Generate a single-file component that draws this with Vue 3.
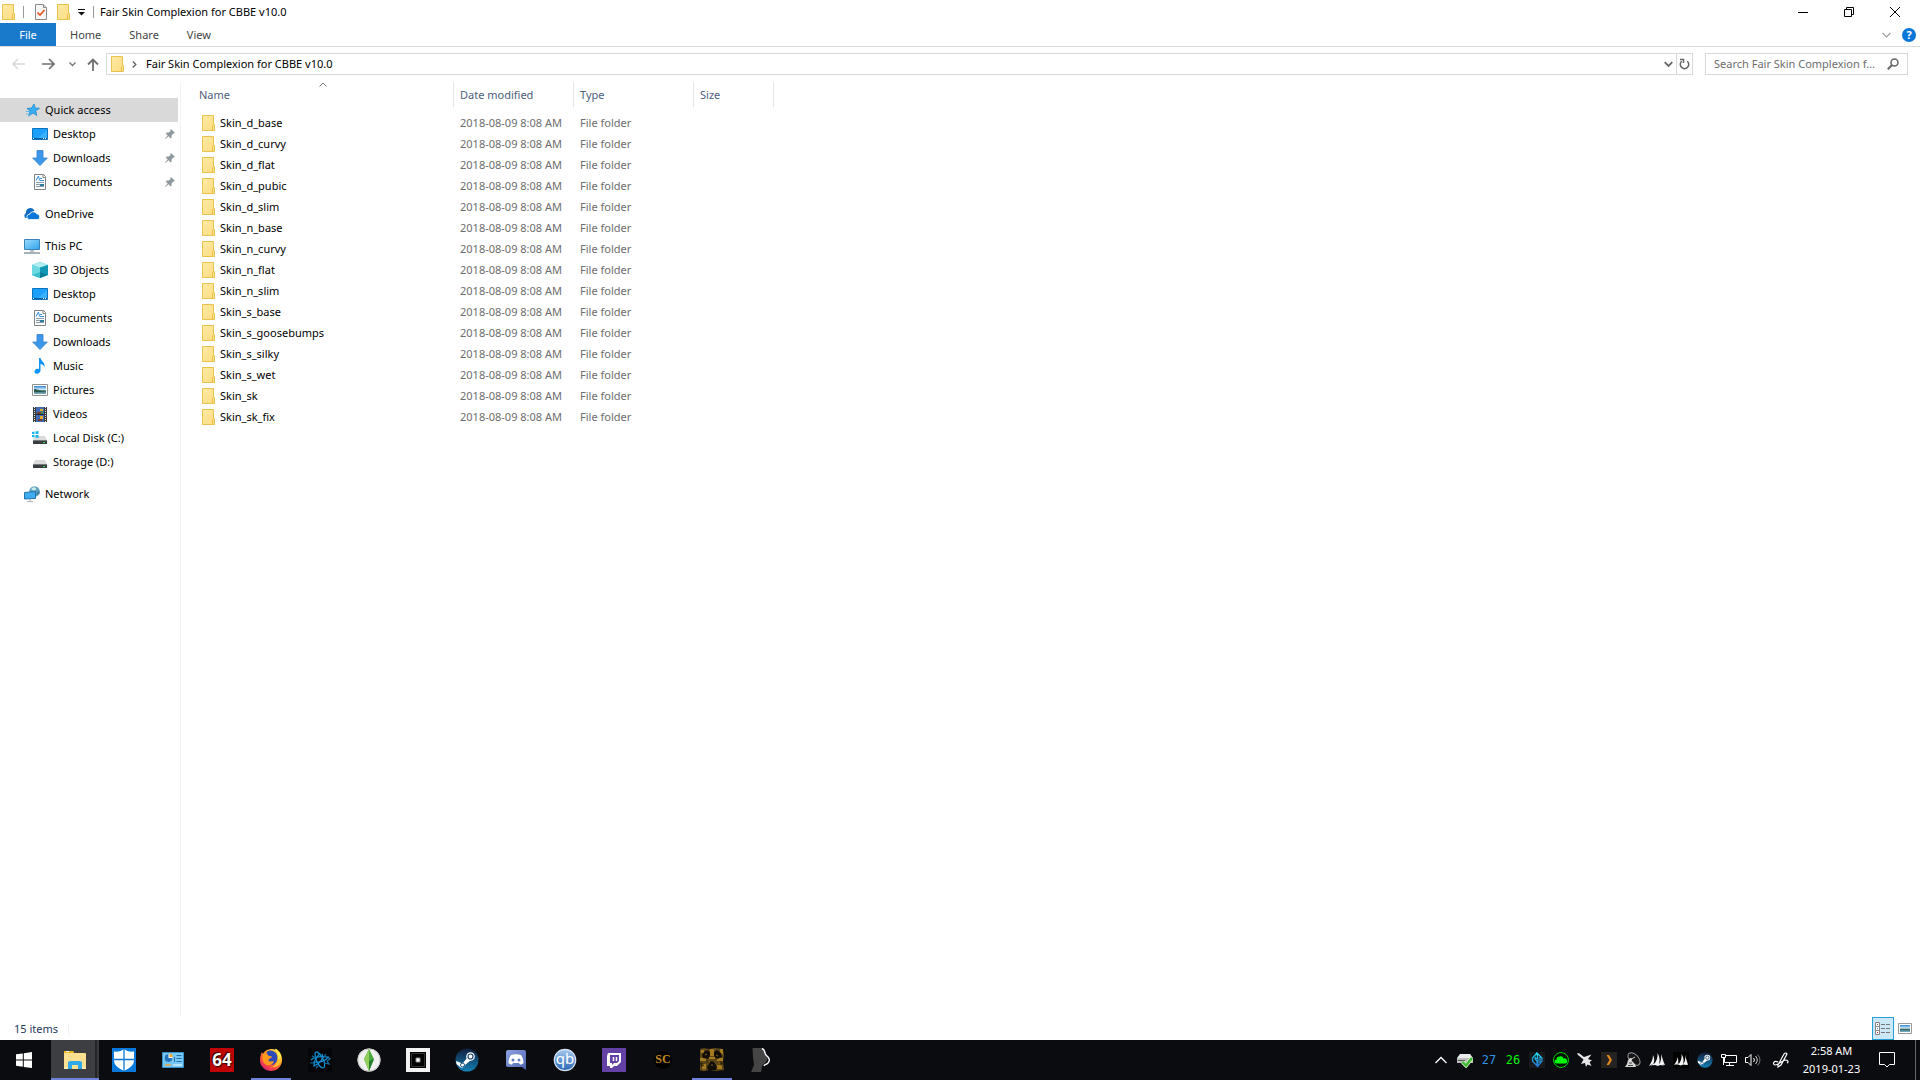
<script setup>
const quickAccess = [
  { label: 'Desktop', icon: 'desktop' },
  { label: 'Downloads', icon: 'downloads' },
  { label: 'Documents', icon: 'documents' },
]

const thisPc = [
  { label: '3D Objects', icon: 'objects' },
  { label: 'Desktop', icon: 'desktop' },
  { label: 'Documents', icon: 'documents' },
  { label: 'Downloads', icon: 'downloads' },
  { label: 'Music', icon: 'music' },
  { label: 'Pictures', icon: 'pictures' },
  { label: 'Videos', icon: 'videos' },
  { label: 'Local Disk (C:)', icon: 'disk-c' },
  { label: 'Storage (D:)', icon: 'disk-d' },
]

const folders = [
  'Skin_d_base', 'Skin_d_curvy', 'Skin_d_flat', 'Skin_d_pubic', 'Skin_d_slim',
  'Skin_n_base', 'Skin_n_curvy', 'Skin_n_flat', 'Skin_n_slim',
  'Skin_s_base', 'Skin_s_goosebumps', 'Skin_s_silky', 'Skin_s_wet',
  'Skin_sk', 'Skin_sk_fix',
]

const apps = [
  { name: 'File Explorer', icon: 'explorer', active: true },
  { name: 'Windows Defender', icon: 'defender' },
  { name: 'Control Panel', icon: 'control' },
  { name: 'AIDA64', icon: 'aida', mark: '64' },
  { name: 'Firefox', icon: 'firefox', running: true },
  { name: 'Battle.net', icon: 'battlenet' },
  { name: 'The Sims', icon: 'sims' },
  { name: 'Square', icon: 'square' },
  { name: 'Steam', icon: 'steam' },
  { name: 'Discord', icon: 'discord' },
  { name: 'qBittorrent', icon: 'qb', mark: 'qb' },
  { name: 'Twitch', icon: 'twitch' },
  { name: 'SC', icon: 'sc', mark: 'SC' },
  { name: 'Stalker', icon: 'stalker', running: true },
  { name: 'Body editor', icon: 'body' },
]

const tray = [
  { name: 'Show hidden icons', icon: 't-caret' },
  { name: 'Safely remove hardware', icon: 't-drive' },
  { name: 'CPU temperature', text: '27', tone: 'blue' },
  { name: 'GPU temperature', text: '26', tone: 'green' },
  { name: 'Armor', icon: 't-armor' },
  { name: 'Cloud', icon: 't-cloud' },
  { name: 'Jet', icon: 't-jet' },
  { name: 'Plex', icon: 't-plex' },
  { name: 'Satellite', icon: 't-dish' },
  { name: 'Corsair', icon: 't-sails' },
  { name: 'Corsair Link', icon: 't-sails-dark' },
  { name: 'Steam', icon: 'steam' },
  { name: 'Network', icon: 't-net' },
  { name: 'Volume', icon: 't-volume' },
]
</script>

<template>
  <div class="screen">
    <svg class="sprite" aria-hidden="true">
      <defs>
        <linearGradient id="g-folder" x1="0" y1="0" x2="1" y2="1">
          <stop offset="0" stop-color="#ffeaa5" /><stop offset="1" stop-color="#fedc82" />
        </linearGradient>
        <linearGradient id="g-steam" x1="0" y1="0" x2="0" y2="1">
          <stop offset="0" stop-color="#111d3c" /><stop offset="1" stop-color="#1381b5" />
        </linearGradient>
        <linearGradient id="g-screen" x1="0" y1="0" x2="1" y2="1">
          <stop offset="0" stop-color="#9bdcff" /><stop offset="1" stop-color="#2fa3ee" />
        </linearGradient>
        <linearGradient id="g-fox" x1=".9" y1="0" x2=".2" y2="1">
          <stop offset="0" stop-color="#fff04a" /><stop offset=".4" stop-color="#ff9a1f" />
          <stop offset=".7" stop-color="#ff4a3d" /><stop offset="1" stop-color="#d3207e" />
        </linearGradient>
        <linearGradient id="g-qb" x1="0" y1="0" x2="0" y2="1">
          <stop offset="0" stop-color="#a9cbef" /><stop offset="1" stop-color="#2765b5" />
        </linearGradient>
        <linearGradient id="g-photo" x1="0" y1="0" x2="0" y2="1">
          <stop offset="0" stop-color="#2f86d6" /><stop offset=".45" stop-color="#d5edf8" />
          <stop offset=".6" stop-color="#35635f" /><stop offset="1" stop-color="#7fb6cf" />
        </linearGradient>
        <linearGradient id="g-blade" x1="0" y1="0" x2="0" y2="1">
          <stop offset="0" stop-color="#19e0f2" /><stop offset="1" stop-color="#2b74d8" />
        </linearGradient>
        <linearGradient id="g-discord" x1="0" y1="0" x2="1" y2="1">
          <stop offset="0" stop-color="#8fa4e0" /><stop offset="1" stop-color="#4d62ae" />
        </linearGradient>
      </defs>

      <symbol id="folder" viewBox="0 0 13 16">
        <path d="M.5.5h11v9h1v6H.5z" fill="url(#g-folder)" stroke="#e9c24c" />
        <path d="M10.500 15V10.500l1-1" fill="none" stroke="#e9c24c" />
      </symbol>
      <symbol id="props" viewBox="0 0 12 16">
        <path d="M.5.5h8l3 3v12H.5z" fill="#f7f7f7" stroke="#8b8b8b" />
        <path d="M8.500.5v3h3" fill="#ddd" stroke="#8b8b8b" />
        <path d="M2.500 8.500L5 11l4.500-5" fill="none" stroke="#e8541a" stroke-width="1.700" />
      </symbol>

      <symbol id="star" viewBox="0 0 16 16">
        <path d="M10 2l1 4 4.500.3-3.800 2.500 1.100 4.700L9 10.900 4.800 14l1.400-4.900L3 6.500l4.500-.4z" fill="#3ab0f3" stroke="#1b86cf" stroke-width=".8" />
        <path d="M2 9.500h4M2 12h3M4 14l2-1" stroke="#66b8ee" />
      </symbol>
      <symbol id="desktop" viewBox="0 0 16 16">
        <path d="M.5 2.500h15v11H.5z" fill="#1aa0fb" stroke="#0b72bf" />
        <path d="M6 12L15 4v8z" fill="#36b1ff" />
        <path d="M1 12.500h14" stroke="#0a5c9f" /><path d="M1 12.500h1M11 12.500h1M13 12.500h1" stroke="#fff" />
      </symbol>
      <symbol id="downloads" viewBox="0 0 16 16">
        <path d="M5 .5h6V8h4.300L8 15.500.7 8H5z" fill="#3c97e8" stroke="#2c7ecb" stroke-width=".8" />
      </symbol>
      <symbol id="documents" viewBox="0 0 16 16">
        <path d="M2.500.5h9l2 2v13h-11z" fill="#fff" stroke="#7f8487" />
        <path d="M11 .5v3h2.500" fill="none" stroke="#7f8487" />
        <path d="M4 6.500L6.500 2l1 4.500M8 4.500h2M8 6.500h4" stroke="#2c8fe0" fill="none" />
        <path d="M4 8.500h8M4 10.500h4M4 12.500h8" stroke="#8b9aa6" /><path d="M8 10h4v2H8z" fill="#2d7da0" />
      </symbol>
      <symbol id="onedrive" viewBox="0 0 16 16">
        <path d="M1.500 12A3 3 0 0 1 2 7a4.500 4.500 0 0 1 8.500-2.500L5 8v4z" fill="#0f6cc4" />
        <path d="M5.500 13.500a2.600 2.600 0 0 1 0-5.200 4 4 0 0 1 7.200-.5 3 3 0 0 1 1.300 5.700z" fill="#0878d8" stroke="#fff" stroke-width=".8" />
      </symbol>
      <symbol id="pc" viewBox="0 0 16 16">
        <path d="M.5 1.500h15v10H.5z" fill="url(#g-screen)" stroke="#3c83b5" />
        <path d="M6 12h4v2H6z" fill="#b9c4cc" /><path d="M0 15h16" stroke="#8899a5" stroke-width="1.500" />
      </symbol>
      <symbol id="objects" viewBox="0 0 16 16">
        <path d="M8 0l8 3v10l-8 3-8-3V3z" fill="#21b5c8" />
        <path d="M0 3l8-3 8 3-8 3z" fill="#b2edf2" /><path d="M0 3l8 2.500V16l-8-3z" fill="#6bd8e2" />
        <path d="M8 5.500L16 3v10l-8-3z" fill="#1298b5" /><path d="M0 13l8-3v6z" fill="#3cc0ce" /><path d="M8 10l8 3-8 3z" fill="#087d96" />
      </symbol>
      <symbol id="music" viewBox="0 0 16 16">
        <path d="M7 0h1.500c.5 3 5 4.500 4 9.500-.4-2-1.600-3-4-3.500v6.500c0 2-2 3.500-4 3.300-3-.3-2.500-4.300.5-5 .8-.2 1.500 0 2 .2z" fill="#0f95f5" />
      </symbol>
      <symbol id="pictures" viewBox="0 0 16 16">
        <path d="M.5 2.500h15v11H.5z" fill="#fff" stroke="#929292" />
        <path d="M2 4h12v8H2z" fill="url(#g-photo)" /><path d="M2 7c4 0 7 2.500 12 3H2z" fill="#2b5b53" />
      </symbol>
      <symbol id="videos" viewBox="0 0 16 16">
        <path d="M1 1h14v15H1z" fill="#3a3a3a" /><path d="M4 1h8v15H4z" fill="#3f6bb8" />
        <path d="M2.500 1v15M13.500 1v15" stroke="#e5e5e5" stroke-dasharray="1 1" />
        <path d="M4 8.500h8" stroke="#222" /><path d="M8 3h3v2H8zM8 10h3v3H8z" fill="#e4ac28" />
        <path d="M5 6h4v2H5zM6 13h4v2H6z" fill="#7b3f31" /><path d="M9 5h2v3H9z" fill="#3f8c52" />
      </symbol>
      <symbol id="disk-d" viewBox="0 0 16 16">
        <path d="M3 6h10l2 4H1z" fill="#dcdcdc" /><path d="M1 10h14v4H1z" fill="#3a3d3f" />
        <path d="M1 10.500h14" stroke="#77797a" /><path d="M11 12h2v1h-2z" fill="#37e04a" />
      </symbol>
      <symbol id="disk-c" viewBox="0 0 16 16">
        <path d="M3 6h10l2 4H1z" fill="#dcdcdc" /><path d="M1 10h14v4H1z" fill="#3a3d3f" />
        <path d="M1 10.500h14" stroke="#77797a" /><path d="M11 12h2v1h-2z" fill="#37e04a" />
        <path d="M0 2l2.500-.4V4H0zM3.500 1.500L6.500 1v3h-3zM0 5h2.500v2.500L0 7zM3.500 5h3v3l-3-.5z" fill="#17b5ee" />
      </symbol>
      <symbol id="network" viewBox="0 0 16 16">
        <circle cx="10.500" cy="5.500" r="5.300" fill="#5a9fbd" /><path d="M7 3c2-2 4-2 5-1s-1 3-3 2.500z" fill="#c5e7ef" /><path d="M13 6l2.500-1v3l-3 1z" fill="#3b7f9e" />
        <path d="M.5 6.500l11-1v7l-11 .5z" fill="#3fabf0" stroke="#2375a8" />
        <path d="M3 15.500h6M6 13v2" stroke="#a9b4bb" />
      </symbol>
      <symbol id="pin" viewBox="0 0 10 10">
        <path d="M6 0l4 4-1 .6-.7-.1-1.800 1.900.1 2L5.700 9.500 3.500 7.300.5 10 0 9.500 2.700 6.500.8 4.400l1-.9 2 .1L5.600 1.700 5.400.8z" fill="#8e989f" />
      </symbol>

      <symbol id="start" viewBox="0 0 24 24">
        <path d="M4 6.300L10.800 5.400V11.600H4zM11.800 5.200L20 4v7.600h-8.200zM4 12.500h6.800v6.200L4 17.800zM11.800 12.500H20V20l-8.200-1.100z" fill="#fff" />
      </symbol>
      <symbol id="explorer" viewBox="0 0 24 24">
        <path d="M1 3h9l1 2h11a1 1 0 0 1 1 1v15H1z" fill="#fbe092" /><path d="M1 3h9l1 2H1z" fill="#f0b91c" />
        <path d="M3 3.500h3" stroke="#fff" /><path d="M5 21v-7l2-1h10l2 1v7h-4v-4H9v4z" fill="#2eaae8" /><path d="M1 21h4v-2H1zM19 21h4v-2h-4z" fill="#fde9ac" />
      </symbol>
      <symbol id="defender" viewBox="0 0 24 24">
        <path d="M0 0h24v24H0z" fill="#0879d8" />
        <path d="M12 1c2 2 6 3 10 2.500V12c0 5-4 8-10 11C6 20 2 17 2 12V3.500C6 4 10 3 12 1z" fill="#fff" />
        <path d="M12 1v22M2 11.500h20" stroke="#0879d8" stroke-width="1.300" />
      </symbol>
      <symbol id="control" viewBox="0 0 24 24">
        <path d="M1.500 4.500h21v15h-21z" fill="#75c7f4" stroke="#3792c9" />
        <circle cx="7.500" cy="10" r="4" fill="#fff" /><path d="M7.500 10V6a4 4 0 1 0 4 4z" fill="#2273bb" /><path d="M8.500 9V5.500A4 4 0 0 1 12 9z" fill="#f1a43a" />
        <path d="M15.500 7.500h5M15.500 10.500h5M15.500 13.500h5M13.500 9v5" stroke="#236fa7" /><path d="M4 17h6" stroke="#f1a43a" stroke-width="1.500" /><path d="M12 17h9" stroke="#fff" />
      </symbol>
      <symbol id="aida" viewBox="0 0 24 24">
        <path d="M0 0h24v24H0z" fill="#c00404" />
      </symbol>
      <symbol id="firefox" viewBox="0 0 24 24">
        <path d="M10 1.500c4-1 7 0 8 2L16.500.5C21 3 23.500 8 23 13c-.6 6-5.500 10-11 10C6 23 1.500 18.500 1 13c-.2-4 1-7 2-9l1 2c1.500-2.500 3-4 6-4.500z" fill="url(#g-fox)" />
        <path d="M7.500 4c3-3 8-1.500 10 2 2.500 5-.5 11-5.500 11-3 0-5-1-6-3l3-3 3-2-3-1z" fill="#2c49b9" />
        <path d="M4 6c2-1 4 0 5 1.500l4 1c-.5 2-3.500 2-3.500 4 1.500 2 3.500 0 5.500 1-1.500 3-4 4-6 4-5-1-6.500-6-5-11.500z" fill="#ff9a1d" />
        <path d="M15.500 1c4 4 4.500 8 2.500 13-1 3-4 5-7 5 6 1 11-2 11.500-8C22.500 6 19.500 2 15.500 1z" fill="#ffc42c" />
        <path d="M15.500 1c3 3 4.500 6 3.500 11 2-1 3-3 3-4-1-3-3-6-6.500-7z" fill="#ffee58" />
      </symbol>
      <symbol id="battlenet" viewBox="0 0 24 24">
        <rect width="24" height="24" rx="2" fill="#030507" />
        <g fill="none" stroke="#138fd2" stroke-width="1.200">
          <path d="M7 5c3-3 7 3 9 8 1 4 1 7-1 7-4-1-8-7-8-15z" />
          <path d="M3 12c3-3 8-4 17-3-2 4-9 6-15 5" />
          <path d="M14 6c2 4-1 9-8 12 0-4 2-9 6-12" />
          <path d="M9 3l2 4M4 8l4 2M20 9l2 2-3 2 2 3-4-1M2 15h5M8 20l2-2M18 6l-3 4" stroke="#1173aa" />
        </g>
      </symbol>
      <symbol id="sims" viewBox="0 0 24 24">
        <circle cx="12" cy="12" r="11.500" fill="#f1f1f1" /><circle cx="12" cy="12" r="11" fill="none" stroke="#c9c9c9" />
        <path d="M12 1l5 10-5 12-5-12z" fill="#4caa3c" /><path d="M12 1v22L7 11z" fill="#91cf5d" /><path d="M12 13l5-2-5 12z" fill="#277d2e" />
      </symbol>
      <symbol id="square" viewBox="0 0 24 24">
        <path d="M0 0h24v24H0z" fill="#f3f3f3" /><path d="M4 4h16v16H4z" fill="#000" /><path d="M5.500 5.500h13v13h-13z" fill="none" stroke="#333" /><path d="M10 10h4v4h-4z" fill="#fff" stroke="#888" />
      </symbol>
      <symbol id="steam" viewBox="0 0 24 24">
        <circle cx="12" cy="12" r="11.500" fill="url(#g-steam)" />
        <path d="M1 13l6.500 2.500 5-6 3 3-5.500 4.500a3.200 3.200 0 0 1-6 1L1.500 16z" fill="#fff" />
        <circle cx="15.500" cy="8.500" r="4.300" fill="#fff" /><circle cx="15.500" cy="8.500" r="2.500" fill="none" stroke="#183e68" stroke-width="1.200" />
        <circle cx="7.500" cy="17" r="2" fill="none" stroke="#1c5586" />
      </symbol>
      <symbol id="discord" viewBox="0 0 24 24">
        <path d="M4 2h16a2 2 0 0 1 2 2v18l-4-3H4a2 2 0 0 1-2-2V4a2 2 0 0 1 2-2z" fill="url(#g-discord)" />
        <path d="M7 7c3-1 7-1 10 0 2 3 2.500 5 2.500 8-1 1-2.500 1.500-3.500 1.500l-1-1.500H9l-1 1.500c-1 0-2.500-.5-3.500-1.500 0-3 .5-5 2.500-8z" fill="#fff" />
        <circle cx="9" cy="12" r="1.500" fill="#6478c5" /><circle cx="15" cy="12" r="1.500" fill="#6478c5" />
      </symbol>
      <symbol id="qb" viewBox="0 0 24 24">
        <circle cx="12" cy="12" r="10.700" fill="url(#g-qb)" stroke="#d5e2f2" stroke-width="1.200" />
      </symbol>
      <symbol id="twitch" viewBox="0 0 24 24">
        <path d="M0 0h24v24H0z" fill="#6441a5" /><path d="M6 5h13v9l-4 4h-3l-2 2H8v-2H5V8z" fill="#fff" />
        <path d="M8 7h9v6l-2 2h-3l-2 2v-2H8z" fill="#6441a5" /><path d="M11.500 9v4M14.500 9v4" stroke="#fff" stroke-width="1.500" />
      </symbol>
      <symbol id="sc" viewBox="0 0 24 24">
        <circle cx="12" cy="12" r="9" fill="#000" />
      </symbol>
      <symbol id="stalker" viewBox="0 0 24 24">
        <path d="M0 1l4-1 5 1 6-1 8 1 1 6-1 6 1 9-8 1-6-1-7 1-6-1-1-7 1-6z" fill="#5d4718" />
        <path d="M1 2h3v3H1zM10 1h4v7h-4zM20 1h3v5h-3zM0 10h6v3H0zM17 10h6v3h-6zM2 16h4v5H2zM17 17h5v4h-5zM9 9h6v2H9z" fill="#a37a20" />
        <g fill="#120e05">
          <path d="M4 4l3-2 3 2v4l-2 3-5-1-1-3zM14 4l3-2 4 3 1 4-5 2-3-3zM11 13l3 1 3 5-1 3H8l-1-3z" />
          <path d="M0 14l3 1 1 3-3 1zM20 13l3 2-2 3zM6 12l2 1-1 3z" opacity=".6" />
        </g>
        <path d="M5 7l2-1M16 7l2 1M11 17h2M3 22h3M18 15h2" stroke="#7f621f" />
      </symbol>
      <symbol id="body" viewBox="0 0 24 24">
        <path d="M3.500 0H14l3 5 2 5-2 4-4 4-1 6H2l3-7-1-8z" fill="#454545" />
        <path d="M13 .5C17 2 15 5 17 7c4 3 4 6 2 8s-3 1-4 3" fill="none" stroke="#fff" stroke-width="1.400" />
      </symbol>

      <symbol id="t-caret" viewBox="0 0 16 16"><path d="M2.500 11L8 5.500l5.500 5.500" fill="none" stroke="#fff" stroke-width="1.300" /></symbol>
      <symbol id="t-drive" viewBox="0 0 16 16">
        <path d="M3 2h10l3 4H0z" fill="#ececec" /><path d="M0 6h16v5H0z" fill="#bdbdbd" /><path d="M1 8.500h7" stroke="#555" />
        <path d="M5.500 10L9 13.500l6-7.500" fill="none" stroke="#c9efba" stroke-width="4" /><path d="M5.500 10L9 13.500l6-7.500" fill="none" stroke="#3fb836" stroke-width="2.400" />
      </symbol>
      <symbol id="t-armor" viewBox="0 0 16 16">
        <path d="M0 0h16v16H0z" fill="#17191c" />
        <path d="M8 1L3.500 6v3L8 14V9L5.500 6.500M8 1l1 7v6l4-5V6zM6 5l2 2M11 4v7" fill="none" stroke="url(#g-blade)" stroke-width="1.200" />
      </symbol>
      <symbol id="t-cloud" viewBox="0 0 16 16">
        <circle cx="8" cy="8" r="7.500" fill="#031003" stroke="#05e60b" stroke-width=".9" /><path d="M3.500 11.500a2 2 0 0 1 0-4 3 3 0 0 1 3-3 3 3 0 0 1 4 2 2.500 2.500 0 0 1 2 5z" fill="#00ff08" />
      </symbol>
      <symbol id="t-jet" viewBox="0 0 16 16"><path d="M0 1l2.500.5L7 5l7.500-2.500L11 7l4 1.500-2.500 1.500 2 4-4-1.500L9 15l-1-4-4 1 2.500-4.500L1 3z" fill="#e5e5e5" /></symbol>
      <symbol id="t-plex" viewBox="0 0 16 16"><path d="M0 0h16v16H0z" fill="#242321" /><path d="M5.500 3h2.500l3 5-3 5H5.500l3-5z" fill="#e5871b" /></symbol>
      <symbol id="t-dish" viewBox="0 0 16 16">
        <ellipse cx="9" cy="7" rx="7.500" ry="4.500" transform="rotate(48 9 7)" fill="#161616" stroke="#999" />
        <path d="M3 8l4 1 3 3 1 3H0l2-3z" fill="#d5d5d5" /><path d="M4 11h3M3 13.500h5" stroke="#444" /><circle cx="5.500" cy="7.500" r="1.500" fill="#eee" /><path d="M5.500 7.500L10 5" stroke="#ccc" />
      </symbol>
      <symbol id="t-sails" viewBox="0 0 16 16">
        <path d="M4 3c1.500 3 1.500 6 .5 8.500L0 14c2.500-3.500 4-7 4-11zM8.500 1c2.500 4 2.500 8 1.500 11l-5 .5c2.500-3.500 4-7 3.500-11.500zM12 2c1.500 4 2 7 4 11l-5.500-1c1.500-3 2-6 1.500-10z" fill="#f4f4f4" />
        <path d="M1 13.500l4-2h8l2 2-4-.5-2 1-3-1z" fill="#f4f4f4" />
      </symbol>
      <symbol id="t-sails-dark" viewBox="0 0 16 16">
        <path d="M0 0h16v16H0z" fill="#000" />
        <path d="M4.500 5c1 3 1 5 .5 6.500L1 13c2-2.500 3.500-5 3.500-8zM8.500 2c2.500 4 2.500 7 1.500 10l-4.500.5c2.500-3.500 3.500-6.500 3-10.500zM12 3c1 4 2 6 3 10l-4.500-1c1.500-3 2-5 1.500-9z" fill="#f4f4f4" />
        <path d="M2 12.500l3-1h8l1 1.500-4-.5-2 1-3-1z" fill="#f4f4f4" />
      </symbol>
      <symbol id="t-net" viewBox="0 0 16 16">
        <path d="M5 3.500h10.500v7H3.500V6M5 13.500h8M8.500 11v3" fill="none" stroke="#fff" /><path d="M.5 2.500h4v3h-4z" fill="#111" stroke="#fff" /><path d="M2.500 5v8" stroke="#fff" />
      </symbol>
      <symbol id="t-volume" viewBox="0 0 16 16">
        <path d="M.5 5.500H3l3-3v11l-3-3H.5zM8.500 6q2 2 0 4" fill="none" stroke="#fff" /><path d="M10.500 4q3.500 4 0 8" fill="none" stroke="#ccc" /><path d="M12.500 2.500q5 5.500 0 11" fill="none" stroke="#777" />
      </symbol>
      <symbol id="t-pen" viewBox="0 0 16 16">
        <path d="M5 13L11 2q2-2 3 0L8 13l-3 2zM5 10C1 8-1 12 2 13c3 0 7-4 10-5 3 0 4 2 2 3" fill="none" stroke="#fff" stroke-width="1.200" />
      </symbol>
    </svg>

    <header class="titlebar">
      <svg class="ico-folder"><use href="#folder" /></svg>
      <span class="rule"></span>
      <button class="plain" aria-label="Properties"><svg class="ico-props"><use href="#props" /></svg></button>
      <button class="plain new-folder" aria-label="New folder"><svg class="ico-folder"><use href="#folder" /></svg></button>
      <button class="plain" aria-label="Customize toolbar">
        <svg width="7" height="9" viewBox="0 0 7 9"><path d="M0 2.500h7" stroke="#111" /><path d="M0 5h7L3.500 8.500z" fill="#111" /></svg>
      </button>
      <span class="rule"></span>
      <h1>Fair Skin Complexion for CBBE v10.0</h1>
      <div class="window-buttons">
        <button class="plain" aria-label="Minimize"><svg width="10" height="10" viewBox="0 0 10 10"><path d="M0 5.500h10" stroke="#000" /></svg></button>
        <button class="plain" aria-label="Restore"><svg width="10" height="10" viewBox="0 0 10 10"><path d="M.5 2.500h7v7h-7zM2.500 2.500v-2h7v7h-2" fill="none" stroke="#000" /></svg></button>
        <button class="plain" aria-label="Close"><svg width="10" height="10" viewBox="0 0 10 10"><path d="M0 0l10 10M10 0L0 10" stroke="#000" /></svg></button>
      </div>
    </header>

    <nav class="ribbon" aria-label="Ribbon">
      <button class="tab file">File</button>
      <button class="tab">Home</button>
      <button class="tab">Share</button>
      <button class="tab">View</button>
      <div class="ribbon-end">
        <button class="plain" aria-label="Expand ribbon"><svg width="9" height="6" viewBox="0 0 9 6"><path d="M.5.8l4 4 4-4" fill="none" stroke="#999" stroke-width="1.200" /></svg></button>
        <button class="plain help" aria-label="Help">?</button>
      </div>
    </nav>

    <div class="navbar">
      <div class="history">
        <button class="plain" aria-label="Back"><svg width="13" height="12" viewBox="0 0 13 12"><path d="M13 6H1M6 1L1 6l5 5" fill="none" stroke="#d8d8d8" stroke-width="1.500" /></svg></button>
        <button class="plain forward" aria-label="Forward"><svg width="13" height="12" viewBox="0 0 13 12"><path d="M0 6h12M7 1l5 5-5 5" fill="none" stroke="#707070" stroke-width="1.700" /></svg></button>
        <button class="plain recent" aria-label="Recent locations"><svg width="7" height="5" viewBox="0 0 7 5"><path d="M.5.5l3 3 3-3" fill="none" stroke="#777" stroke-width="1.400" /></svg></button>
        <button class="plain up" aria-label="Up"><svg width="12" height="13" viewBox="0 0 12 13"><path d="M6 13V1.500M1 6.500l5-5 5 5" fill="none" stroke="#707070" stroke-width="1.800" /></svg></button>
      </div>
      <div class="address">
        <svg class="ico-folder"><use href="#folder" /></svg>
        <svg class="crumb-arrow" viewBox="0 0 5 7"><path d="M.8.5l3 3-3 3" fill="none" stroke="#666" stroke-width="1.400" /></svg>
        <span class="crumb">Fair Skin Complexion for CBBE v10.0</span>
        <button class="plain drop" aria-label="Previous locations"><svg width="9" height="7" viewBox="0 0 9 7"><path d="M.7 1.200l3.800 3.800 3.800-3.800" fill="none" stroke="#666" stroke-width="1.800" /></svg></button>
        <button class="plain refresh" aria-label="Refresh"><svg width="11" height="12" viewBox="0 0 11 12"><path d="M8.300 3.300a4.200 4.200 0 1 1-5.600 0M1 1.500h3.500V5" fill="none" stroke="#666" stroke-width="1.500" /></svg></button>
      </div>
      <label class="search">
        <input type="text" aria-label="Search" placeholder="Search Fair Skin Complexion f..." />
        <svg width="12" height="12" viewBox="0 0 12 12"><circle cx="7.500" cy="4.500" r="3.500" fill="none" stroke="#666" stroke-width="1.500" /><path d="M5 7L.8 11.200" stroke="#666" stroke-width="2" /></svg>
      </label>
    </div>

    <div class="body">
      <aside class="sidebar">
        <section>
          <a href="#" class="node selected"><svg class="ico"><use href="#star" /></svg>Quick access</a>
          <a v-for="item in quickAccess" :key="item.label" href="#" class="node child">
            <svg class="ico"><use :href="'#' + item.icon" /></svg>{{ item.label }}
            <svg class="pin"><use href="#pin" /></svg>
          </a>
        </section>
        <section>
          <a href="#" class="node"><svg class="ico"><use href="#onedrive" /></svg>OneDrive</a>
        </section>
        <section>
          <a href="#" class="node"><svg class="ico"><use href="#pc" /></svg>This PC</a>
          <a v-for="item in thisPc" :key="item.label" href="#" class="node child">
            <svg class="ico"><use :href="'#' + item.icon" /></svg>{{ item.label }}
          </a>
        </section>
        <section>
          <a href="#" class="node"><svg class="ico"><use href="#network" /></svg>Network</a>
        </section>
      </aside>

      <main class="files">
        <table>
          <colgroup><col class="c-name" /><col class="c-date" /><col class="c-type" /><col class="c-size" /></colgroup>
          <thead>
            <tr>
              <th scope="col" class="name">Name
                <svg class="sort" viewBox="0 0 8 5"><path d="M.5 4.500L4 1l3.500 3.500" fill="none" stroke="#777" /></svg>
              </th>
              <th scope="col">Date modified</th>
              <th scope="col">Type</th>
              <th scope="col">Size</th>
            </tr>
          </thead>
          <tbody>
            <tr v-for="name in folders" :key="name">
              <td class="name"><div class="entry"><svg class="ico-folder"><use href="#folder" /></svg>{{ name }}</div></td>
              <td>2018-08-09 8:08 AM</td>
              <td>File folder</td>
              <td></td>
            </tr>
          </tbody>
        </table>
      </main>
    </div>

    <footer class="status">
      <span class="count">15 items</span>
      <div class="views">
        <button class="plain view on" aria-label="Details view">
          <svg width="16" height="13" viewBox="0 0 16 13">
            <path d="M.5.5h4v12h-4zM.5 4.500h4M.5 8.500h4" fill="#fff" stroke="#888" />
            <path d="M2 2.500h1" stroke="#555" /><path d="M2 6.500h1" stroke="#2d8fe0" /><path d="M2 10.500h1" stroke="#d02020" />
            <path d="M6 2.500h10M6 6.500h10M6 10.500h10" stroke="#777" stroke-dasharray="4 1" />
          </svg>
        </button>
        <button class="plain view" aria-label="Large icons view">
          <svg width="14" height="11" viewBox="0 0 14 11"><path d="M.5.5h13v10H.5z" fill="#fff" stroke="#999" /><path d="M2 2h10v7H2z" fill="url(#g-photo)" /></svg>
        </button>
      </div>
    </footer>

    <div class="taskbar">
      <button class="plain start" aria-label="Start"><svg class="app-ico"><use href="#start" /></svg></button>
      <div class="apps">
        <button v-for="app in apps" :key="app.name" class="plain app" :class="{ active: app.active, running: app.running }" :aria-label="app.name">
          <svg class="app-ico"><use :href="'#' + app.icon" /></svg>
          <span v-if="app.mark" class="mark" :class="app.icon">{{ app.mark }}</span>
        </button>
      </div>
      <div class="tray">
        <button v-for="t in tray" :key="t.name" class="plain tray-item" :aria-label="t.name">
          <span v-if="t.text" class="temp" :class="t.tone">{{ t.text }}</span>
          <svg v-else class="ico"><use :href="'#' + t.icon" /></svg>
        </button>
        <button class="plain tray-item pen" aria-label="Ink workspace"><svg class="ico"><use href="#t-pen" /></svg></button>
        <div class="clock"><span>2:58 AM</span><span>2019-01-23</span></div>
        <button class="plain notify" aria-label="Notifications">
          <svg width="16" height="16" viewBox="0 0 16 16"><path d="M.5.5h15v12h-5L8 15l-2.500-2.500h-5z" fill="none" stroke="#fff" /></svg>
        </button>
        <button class="plain peek" aria-label="Show desktop"></button>
      </div>
    </div>
  </div>
</template>

<style>
body {
  margin: 0;
  background: #fff;
}
</style>

<style scoped>
.screen {
  display: flex;
  flex-direction: column;
  min-height: 100vh;
  overflow: hidden;
  background: #fff;
  color: #000;
  font: 11px/16px "Noto Sans", "Open Sans", sans-serif;
}

.sprite {
  position: absolute;
  width: 0;
  height: 0;
}

svg {
  display: block;
  flex: none;
}

.plain {
  display: flex;
  align-items: center;
  justify-content: center;
  flex: none;
  margin: 0;
  padding: 0;
  border: 0;
  background: none;
  color: inherit;
  font: inherit;
}

.ico {
  width: 16px;
  height: 16px;
}

.ico-folder {
  width: 13px;
  height: 16px;
}

.ico-props {
  width: 12px;
  height: 16px;
}

/* Title bar */
.titlebar {
  display: flex;
  align-items: center;
  gap: 8px;
  height: 23px;
  padding-left: 2px;
}

.rule {
  width: 1px;
  height: 12px;
  background: #999;
}

.titlebar .rule:first-of-type {
  margin-right: 3px;
}

.new-folder {
  margin-left: 2px;
}

h1 {
  margin: 0 0 0 -2px;
  font-size: 11px;
  font-weight: 400;
  line-height: 16px;
}

.window-buttons {
  display: flex;
  margin-left: auto;
  padding-right: 2px;
}

.window-buttons .plain {
  width: 46px;
  height: 20px;
}

/* Ribbon */
.ribbon {
  display: flex;
  height: 23px;
  border-bottom: 1px solid #dadbdc;
}

.tab {
  padding: 0 14px;
  border: 0;
  background: none;
  color: #444;
  font: inherit;
}

.tab.file {
  width: 56px;
  background: #1979ca;
  color: #fff;
}

.ribbon-end {
  display: flex;
  align-items: center;
  gap: 11px;
  margin-left: auto;
  padding-right: 4px;
}

.help {
  width: 14px;
  height: 14px;
  border-radius: 50%;
  background: #0877d7;
  color: #fff;
  font-weight: 700;
}

/* Navigation bar */
.navbar {
  display: flex;
  align-items: flex-start;
  height: 29px;
  padding: 6px 12px 0 0;
}

.history {
  display: flex;
  align-items: center;
  width: 106px;
  height: 22px;
  box-sizing: border-box;
  padding-left: 12px;
}

.forward {
  margin-left: 17px;
}

.recent {
  margin-left: 14px;
}

.up {
  margin-left: 11px;
}

.address {
  display: flex;
  align-items: center;
  flex: 1;
  height: 22px;
  box-sizing: border-box;
  padding-left: 4px;
  border: 1px solid #d9d9d9;
}

.crumb-arrow {
  width: 5px;
  height: 7px;
  margin: 0 9px 0 8px;
}

.crumb {
  flex: 1;
}

.drop {
  width: 16px;
  height: 20px;
}

.refresh {
  width: 16px;
  height: 20px;
  border-left: 1px solid #d9d9d9;
}

.search {
  display: flex;
  align-items: center;
  width: 203px;
  height: 22px;
  box-sizing: border-box;
  margin-left: 12px;
  padding: 0 8px;
  border: 1px solid #d9d9d9;
}

.search input {
  flex: 1;
  min-width: 0;
  padding: 0;
  border: 0;
  outline: 0;
  background: none;
  font: inherit;
}

.search input::placeholder {
  color: #6d6d6d;
  opacity: 1;
}

/* Body */
.body {
  display: flex;
  flex: 1;
}

.sidebar {
  display: flex;
  flex-direction: column;
  gap: 8px;
  width: 180px;
  padding-top: 16px;
  border-right: 1px solid #f3f3f3;
}

.node {
  display: flex;
  align-items: center;
  gap: 5px;
  width: 178px;
  height: 24px;
  box-sizing: border-box;
  padding: 0 3px 0 24px;
  color: #000;
  text-decoration: none;
}

.node.child {
  padding-left: 32px;
}

.node.selected {
  background: #d9d9d9;
}

.pin {
  width: 10px;
  height: 10px;
  margin-left: auto;
}

.files {
  flex: 1;
}

table {
  width: 593px;
  table-layout: fixed;
  border-collapse: separate;
  border-spacing: 0;
}

.c-name {
  width: 273px;
}

.c-date,
.c-type {
  width: 120px;
}

.c-size {
  width: 80px;
}

th {
  position: relative;
  height: 25px;
  padding: 0 0 0 6px;
  border-right: 1px solid #e5e5e5;
  color: #4c607a;
  font-weight: 400;
  text-align: left;
}

th.name {
  padding-left: 18px;
}

.sort {
  position: absolute;
  top: 0;
  left: 138px;
  width: 8px;
  height: 5px;
}

tbody::before {
  display: block;
  height: 6px;
  content: "";
}

td {
  height: 19px;
  padding: 2px 0 0 6px;
  color: #6d6d6d;
  vertical-align: top;
}

td.name {
  padding-left: 21px;
  color: #000;
}

.entry {
  display: flex;
  align-items: center;
  gap: 5px;
}

/* Status bar */
.status {
  display: flex;
  align-items: center;
  height: 23px;
  color: #1e395b;
}

.count {
  height: 12px;
  padding: 0 10px 0 14px;
  border-right: 1px solid #f1f1f1;
  line-height: 12px;
}

.views {
  display: flex;
  margin-left: auto;
  padding-right: 4px;
}

.view {
  width: 22px;
  height: 23px;
}

.view.on {
  border: 1px solid #26a0da;
  background: #cce8f6;
}

/* Taskbar */
.taskbar {
  display: flex;
  height: 40px;
  background: #0b0c10;
  color: #fff;
}

.start {
  width: 48px;
  margin-right: 3px;
}

.apps {
  display: flex;
  gap: 1px;
}

.app {
  display: grid;
  place-items: center;
  place-content: center;
  width: 48px;
  box-sizing: border-box;
  border-bottom: 2px solid transparent;
  border-top: 2px solid transparent;
}

.app > * {
  grid-area: 1 / 1;
}

.app.active {
  border-bottom-color: #6f83dc;
  background: linear-gradient(90deg, #3d3e41 44px, #242529 44px, #242529 46px, #38393c 46px) border-box;
}

.app.running {
  background: linear-gradient(#6f83dc, #6f83dc) center bottom / 40px 2px no-repeat border-box;
}

.app-ico {
  width: 24px;
  height: 24px;
}

.mark {
  height: 24px;
  line-height: 24px;
}

.mark.aida {
  font-size: 17px;
  font-weight: 700;
  text-shadow: 1px 1px 1px #310000, -1px -1px 1px #310000;
}

.mark.qb {
  font-size: 15px;
  line-height: 20px;
}

.mark.sc {
  color: #c08a22;
  font-family: "Liberation Serif", serif;
  font-size: 12px;
  font-weight: 700;
  line-height: 22px;
}

.tray {
  display: flex;
  align-items: center;
  margin-left: auto;
}

.tray-item {
  width: 24px;
  height: 40px;
}

.tray-item.pen {
  width: 32px;
}

.temp {
  font: 12px/16px "DejaVu Sans Mono", monospace;
}

.temp.blue {
  color: #2d93e0;
}

.temp.green {
  color: #08f508;
}

.clock {
  display: flex;
  flex-direction: column;
  align-items: center;
  gap: 2px;
  width: 69px;
}

.notify {
  width: 42px;
  height: 40px;
}

.peek {
  width: 5px;
  height: 40px;
  margin-left: 7px;
  border-left: 1px solid #666;
}
</style>
